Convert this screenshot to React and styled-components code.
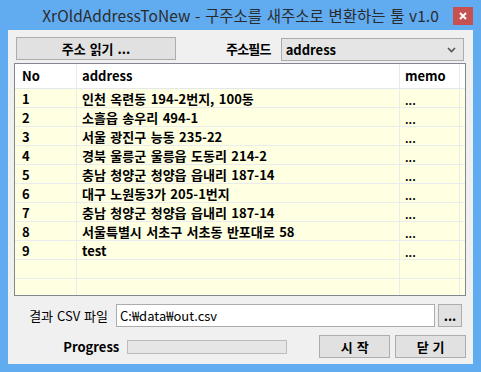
import React from 'react';
import styled, { createGlobalStyle } from 'styled-components';

const rows = [
    { no: 1, address: '인천 옥련동 194-2번지, 100동', memo: '...' },
    { no: 2, address: '소흘읍 송우리 494-1', memo: '...' },
    { no: 3, address: '서울 광진구 능동 235-22', memo: '...' },
    { no: 4, address: '경북 울릉군 울릉읍 도동리 214-2', memo: '...' },
    { no: 5, address: '충남 청양군 청양읍 읍내리 187-14', memo: '...' },
    { no: 6, address: '대구 노원동3가 205-1번지', memo: '...' },
    { no: 7, address: '충남 청양군 청양읍 읍내리 187-14', memo: '...' },
    { no: 8, address: '서울특별시 서초구 서초동 반포대로 58', memo: '...' },
    { no: 9, address: 'test', memo: '...' },
    { no: '', address: '', memo: '' },
    { no: '', address: '', memo: '' },
];

export default function App() {
    return (
        <>
            <GlobalStyle />
            <Window>
                <TitleBar>
                    <span />
                    <Title>XrOldAddressToNew - 구주소를 새주소로 변환하는 툴 v1.0</Title>
                    <CloseButton>
                        <svg width="8" height="8" viewBox="0 0 8 8">
                            <path d="M1 1l6 6M7 1l-6 6" stroke="#fff" strokeWidth="2" />
                        </svg>
                    </CloseButton>
                </TitleBar>

                <Client>
                    <TopRow>
                        <Button $width="160px">주소 읽기 ...</Button>
                        <FieldLabel>주소필드</FieldLabel>
                        <Combo>
                            <span>address</span>
                            <svg width="9" height="6" viewBox="0 0 9 6">
                                <path d="M1 1l3.5 3.5L8 1" stroke="#555" strokeWidth="1.6" fill="none" />
                            </svg>
                        </Combo>
                    </TopRow>

                    <Grid>
                        <HeaderRow>
                            <HeaderCell $pad="7px">No</HeaderCell>
                            <HeaderCell>address</HeaderCell>
                            <HeaderCell>memo</HeaderCell>
                            <HeaderCell />
                        </HeaderRow>
                        {rows.map((r, i) => (
                            <Row key={i}>
                                <Cell $pad="7px">{r.no}</Cell>
                                <Cell>{r.address}</Cell>
                                <Cell $memo>{r.memo}</Cell>
                                <Cell />
                            </Row>
                        ))}
                    </Grid>

                    <BottomRow>
                        <RowLabel $width="94px">결과 CSV 파일</RowLabel>
                        <TextBox>C:₩data₩out.csv</TextBox>
                        <Button $width="24px">...</Button>
                    </BottomRow>

                    <BottomRow>
                        <RowLabel $width="107px" $bold>Progress</RowLabel>
                        <ProgressBar />
                        <Spacer />
                        <Button $width="72px">시 작</Button>
                        <Button $width="72px">닫 기</Button>
                    </BottomRow>
                </Client>
            </Window>
        </>
    );
}

const GlobalStyle = createGlobalStyle`
    html, body {
        margin: 0;
        padding: 0;
        background: #ffffff;
    }
    body {
        font-family: "Noto Sans CJK KR", "Noto Sans", sans-serif;
    }
`;

const Window = styled.div`
    width: 481px;
    height: 372px;
    box-sizing: border-box;
    background: #61abf1;
    display: flex;
    flex-direction: column;
`;

const TitleBar = styled.div`
    height: 30px;
    display: grid;
    grid-template-columns: 1fr auto 1fr;
    align-items: start;
`;

const Title = styled.div`
    font-size: 15.5px;
    letter-spacing: 0.05px;
    word-spacing: 1px;
    line-height: 31px;
    color: #2b2b2b;
    white-space: nowrap;
`;

const CloseButton = styled.div`
    justify-self: end;
    margin: 7px 8px 0 0;
    width: 20px;
    height: 18px;
    background: #c75050;
    display: flex;
    align-items: center;
    justify-content: center;
`;

const Client = styled.div`
    flex: 1;
    margin: 0 8px 8px;
    background: #f0f0f0;
    padding: 7px 7px 0 6px;
    display: flex;
    flex-direction: column;
`;

const TopRow = styled.div`
    height: 24px;
    padding: 0 2px;
    margin-bottom: 2px;
    display: flex;
    align-items: flex-start;
`;

const Button = styled.div`
    width: ${p => p.$width};
    height: 23px;
    box-sizing: border-box;
    border: 1px solid #adadad;
    background: #e1e1e1;
    display: flex;
    align-items: center;
    justify-content: center;
    font-size: 13px;
    font-weight: 700;
    word-spacing: 1px;
    color: #000;
`;

const FieldLabel = styled.div`
    margin: 0 10px 0 50px;
    font-size: 13px;
    font-weight: 700;
    line-height: 23px;
    letter-spacing: -0.8px;
`;

const Combo = styled.div`
    flex: 1;
    margin-top: 1px;
    height: 23px;
    box-sizing: border-box;
    border: 1px solid #acacac;
    background: #e5e5e5;
    display: flex;
    align-items: center;
    justify-content: space-between;
    padding: 0 7px 0 4px;
    font-size: 13px;
    font-weight: 700;
`;

const Grid = styled.div`
    height: 233px;
    box-sizing: border-box;
    border: 1px solid #828790;
    background: #ffffe1;
    overflow: hidden;
`;

const HeaderRow = styled.div`
    display: grid;
    grid-template-columns: 62px 323px 60px 1fr;
    height: 25px;
    box-sizing: border-box;
    background: #ffffff;
    border-bottom: 1px solid #e3e8ec;
`;

const HeaderCell = styled.div`
    border-right: 1px solid #e3ebf3;
    padding-left: ${p => p.$pad || '5px'};
    font-size: 13px;
    font-weight: 700;
    line-height: 24px;

    &:last-child {
        border-right: none;
    }
`;

const Row = styled.div`
    display: grid;
    grid-template-columns: 62px 323px 60px 1fr;
    height: 19px;
    box-sizing: border-box;
    border-bottom: 1px solid #e8ecee;
`;

const Cell = styled.div`
    border-right: 1px solid #e8ecee;
    padding-left: ${p => p.$pad || '5px'};
    font-size: ${p => (p.$memo ? '11px' : '13px')};
    font-weight: 700;
    word-spacing: 1.5px;
    line-height: ${p => (p.$memo ? '22px' : '20px')};
    white-space: nowrap;
    overflow: hidden;

    &:last-child {
        border-right: none;
    }
`;

const BottomRow = styled.div`
    margin-top: 8px;
    height: 23px;
    display: flex;
    align-items: center;
    gap: 5px;
`;

const RowLabel = styled.div`
    width: ${p => p.$width};
    text-align: right;
    font-size: 13px;
    font-weight: ${p => (p.$bold ? 700 : 400)};
    word-spacing: 1px;
    margin-right: 3px;
`;

const TextBox = styled.div`
    width: 319px;
    height: 23px;
    box-sizing: border-box;
    border: 1px solid #acacac;
    background: #ffffff;
    padding-left: 3px;
    font-size: 13px;
    line-height: 21px;
    margin-right: -2px;
`;

const ProgressBar = styled.div`
    width: 162px;
    height: 14px;
    box-sizing: border-box;
    border: 1px solid #bcbcbc;
    background: #e6e6e6;
`;

const Spacer = styled.div`
    width: 23px;
`;
